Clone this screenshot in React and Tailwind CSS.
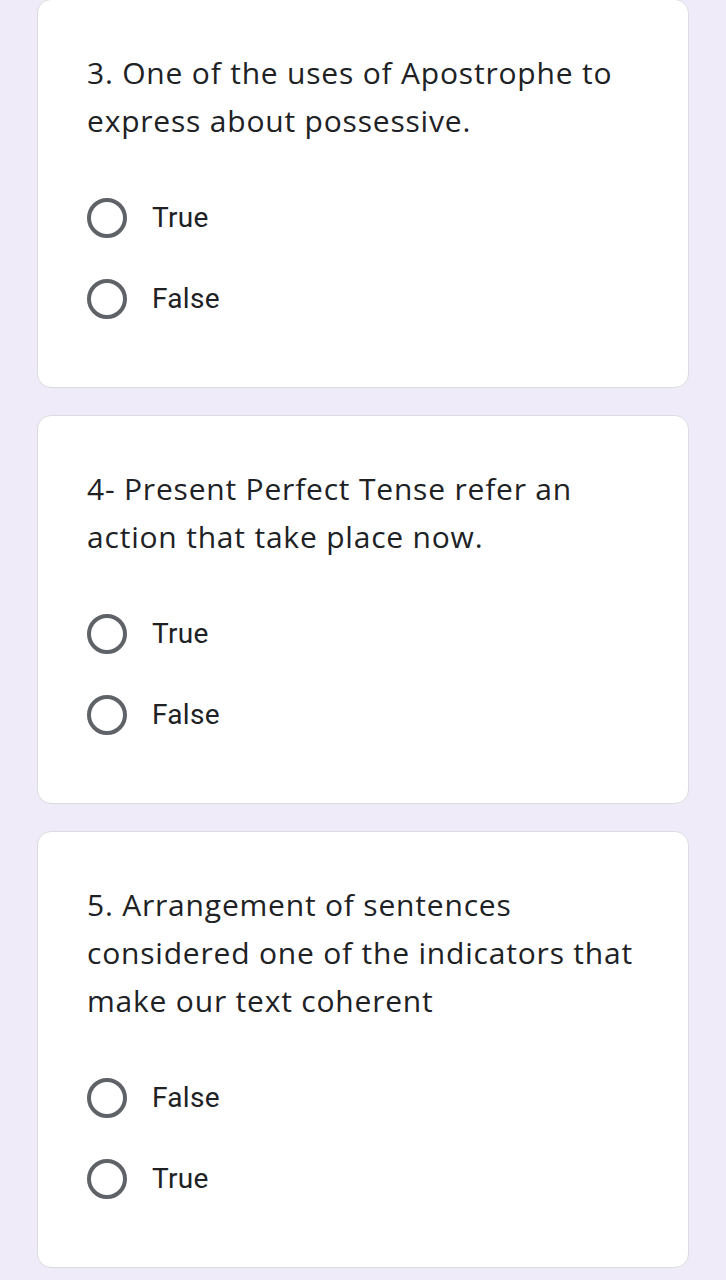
import React from "react";

const questions = [
  {
    lines: ["3. One of the uses of Apostrophe to", "express about possessive."],
    options: ["True", "False"],
  },
  {
    lines: ["4- Present Perfect Tense refer an", "action that take place now."],
    options: ["True", "False"],
  },
  {
    lines: [
      "5. Arrangement of sentences",
      "considered one of the indicators that",
      "make our text coherent",
    ],
    options: ["False", "True"],
  },
];

function Radio() {
  return (
    <span className="block w-[40px] h-[40px] rounded-full border-[4px] border-[#5f6368] shrink-0" />
  );
}

export default function App() {
  return (
    <div
      className="min-h-[1280px] bg-[#efebf8] flex flex-col items-center gap-[27px] pb-[20px]"
      style={{ fontFamily: "Roboto, 'Liberation Sans', sans-serif" }}
    >
      {questions.map((q, i) => (
        <div
          key={i}
          className={`w-[652px] bg-white border border-[#dadce0] rounded-[14px] pt-[49px] pb-[64px] pl-[49px] pr-[20px] ${
            i === 0 ? "-mt-[1px]" : ""
          }`}
        >
          <div
            className="text-[30px] leading-[48px] text-[#202124] tracking-[0.8px]"
            style={{ fontFamily: "'Open Sans', Roboto, sans-serif" }}
          >
            {q.lines.map((l, j) => (
              <div key={j} className="whitespace-nowrap">
                {l}
              </div>
            ))}
          </div>
          <div className="mt-[49px] flex flex-col gap-[33px]">
            {q.options.map((o, k) => (
              <div key={k} className="h-[48px] flex items-center">
                <Radio />
                <span className="ml-[25px] text-[28px] tracking-[0.3px] text-[#202124]">{o}</span>
              </div>
            ))}
          </div>
        </div>
      ))}
    </div>
  );
}
